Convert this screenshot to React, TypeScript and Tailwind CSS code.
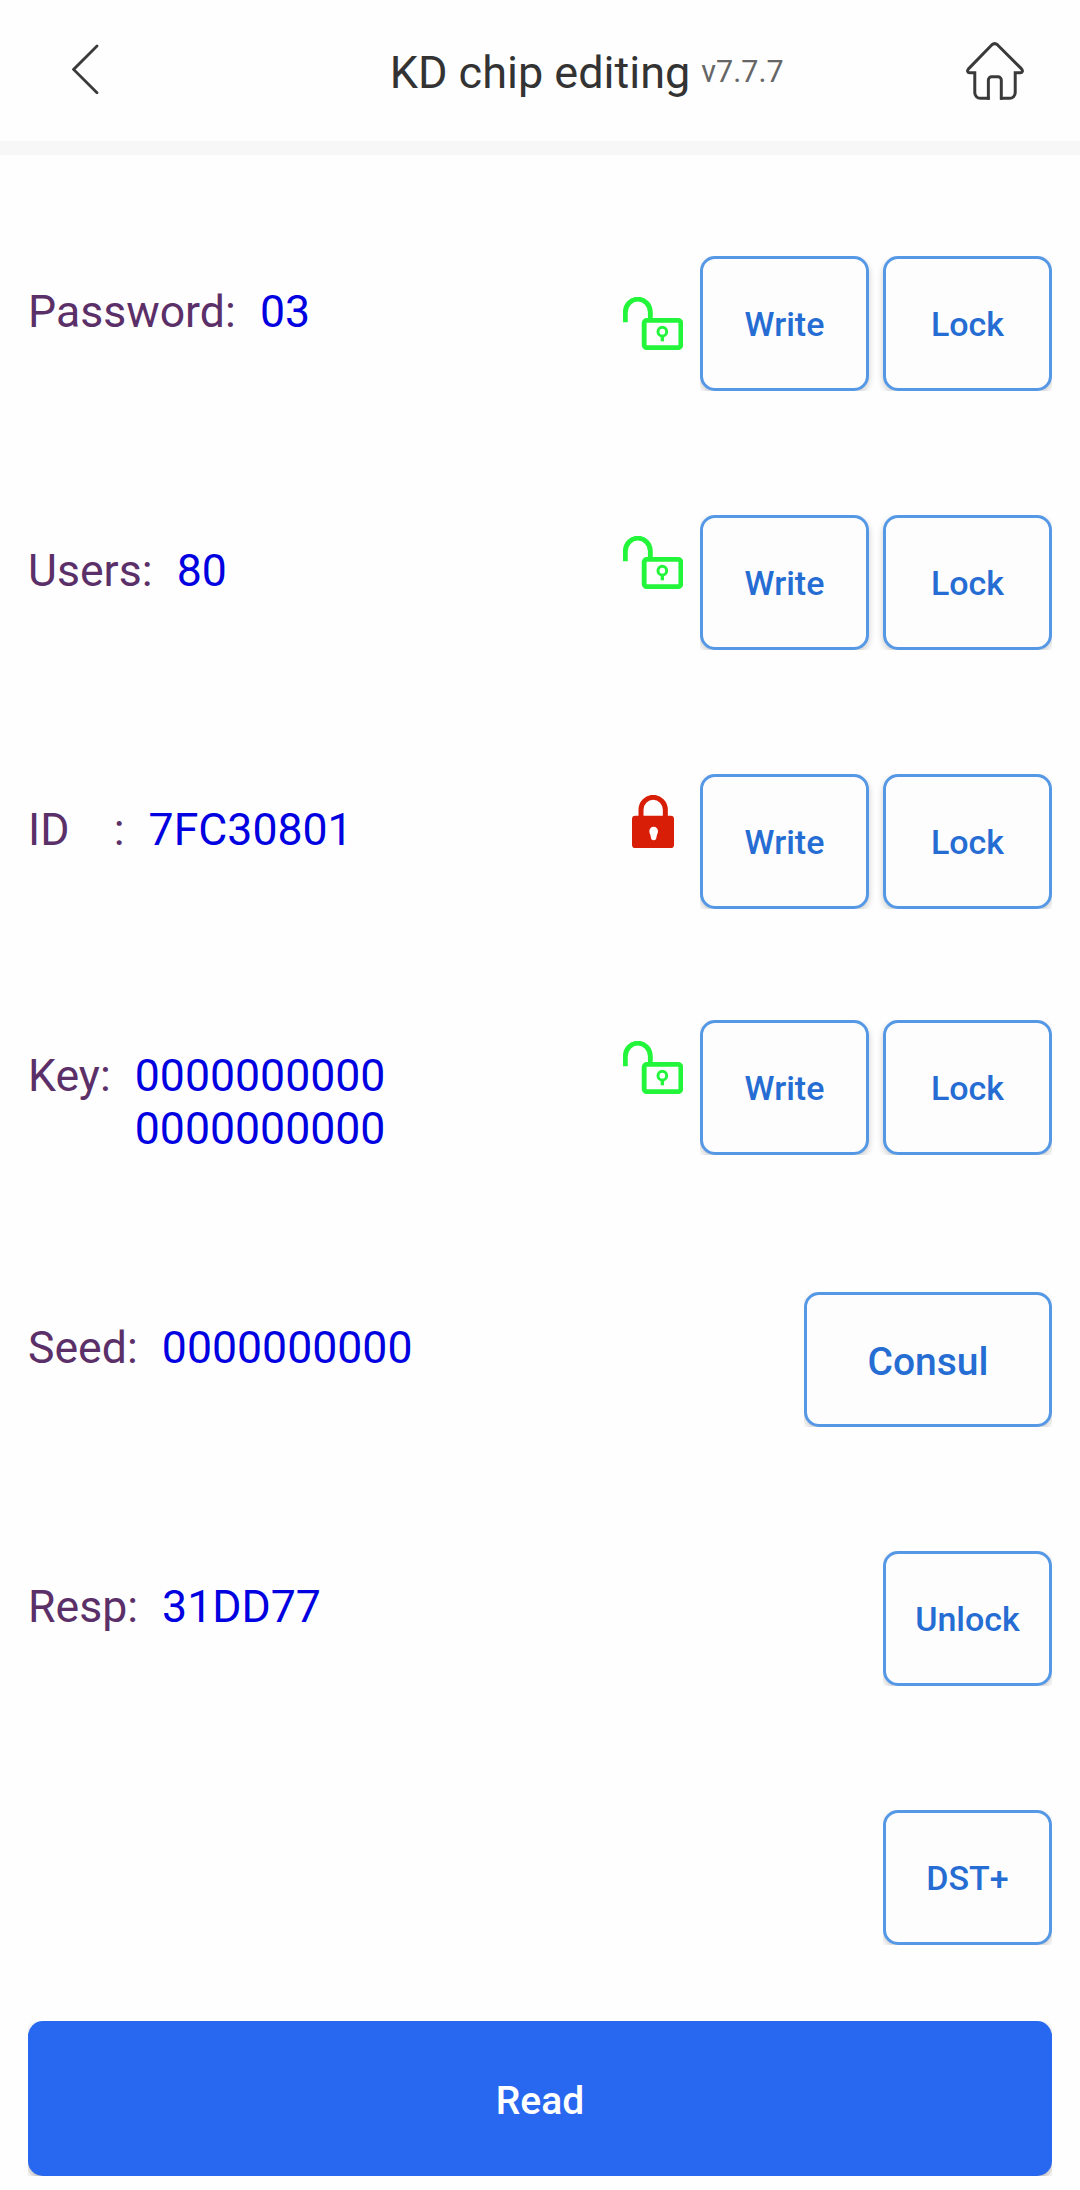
import type { ReactNode } from "react";
import { clsx } from "clsx";

type LockState = "open" | "locked";

interface Field {
  label:      string;
  value:      string[];
  state?:     LockState;
  iconClass?: string;
  rowClass:   string;
  actions:    string[];
}

const FIELDS: Field[] = [
  { label: "Password:", value: ["03"],       state: "open",   iconClass: "mt-[41px]", rowClass: "mt-[101px]", actions: ["Write", "Lock"] },
  { label: "Users:",    value: ["80"],       state: "open",   iconClass: "mt-[21px]", rowClass: "mt-[124px]", actions: ["Write", "Lock"] },
  { label: "ID    :",   value: ["7FC30801"], state: "locked", iconClass: "mt-[21px]", rowClass: "mt-[124px]", actions: ["Write", "Lock"] },
  { label: "Key:",      value: ["0000000000", "0000000000"], state: "open", iconClass: "mt-[21px]", rowClass: "mt-[111px]", actions: ["Write", "Lock"] },
  { label: "Seed:",     value: ["0000000000"], rowClass: "mt-[137px]", actions: ["Consul"] },
  { label: "Resp:",     value: ["31DD77"],     rowClass: "mt-[124px]", actions: ["Unlock"] },
  { label: "",          value: [],             rowClass: "mt-[124px]", actions: ["DST+"] },
];

function BackIcon() {
  return (
    <svg viewBox="0 0 27 51" className="w-[27px] h-[51px]" fill="none" stroke="#3a3a3a" strokeWidth="2.8" strokeLinecap="round">
      <path d="M25 2L1.6 25.4L25 48.8" />
    </svg>
  );
}

function HomeIcon() {
  return (
    <svg viewBox="0 0 174 175" className="w-[58px] h-[58px]" fill="none" stroke="#3a3a3a" strokeWidth="9">
      <path d="M71 170H43a17 17 0 0 1-17-17V93H11c-7 0-9-6-4-12L77 9q9-8 18 0l72 72c5 6 3 12-4 12h-15v60a17 17 0 0 1-17 17h-29" />
      <path d="M67 174v-59a10 10 0 0 1 10-10h19a10 10 0 0 1 10 10v59" />
    </svg>
  );
}

function OpenLockIcon() {
  return (
    <svg viewBox="0 0 180 159" className="w-[60px] h-[53px]" fill="none" stroke="#22f53a">
      <path d="M7 76V46a37 39 0 0 1 75 0v20" strokeWidth="14.5" />
      <rect x="63.5" y="70" width="110" height="82" rx="8" strokeWidth="14.5" />
      <circle cx="118" cy="104" r="13" strokeWidth="9" />
      <path d="M118 117v16" strokeWidth="10" />
    </svg>
  );
}

function ClosedLockIcon() {
  return (
    <svg viewBox="0 0 126 159" className="w-[42px] h-[53px]" fill="none">
      <path d="M27 66V44a36.5 37 0 0 1 73 0v22" stroke="#d81e06" strokeWidth="15" />
      <rect y="62" width="126" height="97" rx="10" fill="#d81e06" />
      <path d="M52 108a13 13 0 1 1 26 0q0 6-3 11l-3 14q-7 6-14 0l-3-14q-3-5-3-11z" fill="#fff" />
    </svg>
  );
}

function ActionButton({ children }: { children: ReactNode }) {
  const wide = children === "Consul";
  return (
    <button
      type="button"
      className={clsx(
        "h-[135px] rounded-[15px] border-[3px] border-[#5498e6] bg-[#fdfdfd] font-medium text-[#266dd3] shadow-[0_3px_6px_rgba(0,0,0,0.2)]",
        wide ? "w-[248px] pt-[5px] text-[39px]" : "w-[169px] pt-[2px] text-[34px]"
      )}
    >
      {children}
    </button>
  );
}

function FieldRow({ label, value, state, iconClass, rowClass, actions }: Field) {
  return (
    <div className={clsx("flex h-[135px] items-start", rowClass)}>
      <div className="mt-[30px] flex flex-1 whitespace-pre text-[44.6px] leading-[53px]">
        <span className="mr-[2px] text-[#5b3069]">{label}{"  "}</span>
        <div className="text-[#0000e0]">
          {value.map((line, i) => (
            <div key={i}>{line}</div>
          ))}
        </div>
      </div>
      {state && (
        <div className={clsx("mr-[17px] flex w-[60px] justify-center", iconClass)}>
          {state === "open" ? <OpenLockIcon /> : <ClosedLockIcon />}
        </div>
      )}
      {/* the group clips the button shadow so only the corners show it */}
      <div className="flex gap-[14px] overflow-hidden">
        {actions.map((a) => (
          <ActionButton key={a}>{a}</ActionButton>
        ))}
      </div>
    </div>
  );
}

export default function App() {
  return (
    <div className="h-[2190px] w-[1080px] overflow-hidden bg-[#fefefe] font-['Roboto',sans-serif]">
      <header className="grid h-[155px] grid-cols-[1fr_auto_1fr] items-start border-b-[14px] border-[#f7f7f7]">
        <button type="button" className="ml-[72px] mt-[44px] w-[27px]">
          <BackIcon />
        </button>
        <h1 className="mt-[46px] text-[45px] leading-[53px] text-[#333]">KD chip editing</h1>
        <div className="flex justify-between pl-[11px] pr-[56px]">
          <span className="mt-[54px] text-[30.5px] leading-[36px] text-[#666]">v7.7.7</span>
          <button type="button" className="mt-[42px]">
            <HomeIcon />
          </button>
        </div>
      </header>

      <main className="px-[28px]">
        {FIELDS.map((f, i) => (
          <FieldRow key={i} {...f} />
        ))}
        <div className="mt-[76px] overflow-hidden">
          <button type="button" className="h-[155px] w-full rounded-[15px] bg-[#2868f0] pt-[5px] text-[39px] font-medium text-white shadow-[0_3px_6px_rgba(0,0,0,0.3)]">
            Read
          </button>
        </div>
      </main>
    </div>
  );
}
